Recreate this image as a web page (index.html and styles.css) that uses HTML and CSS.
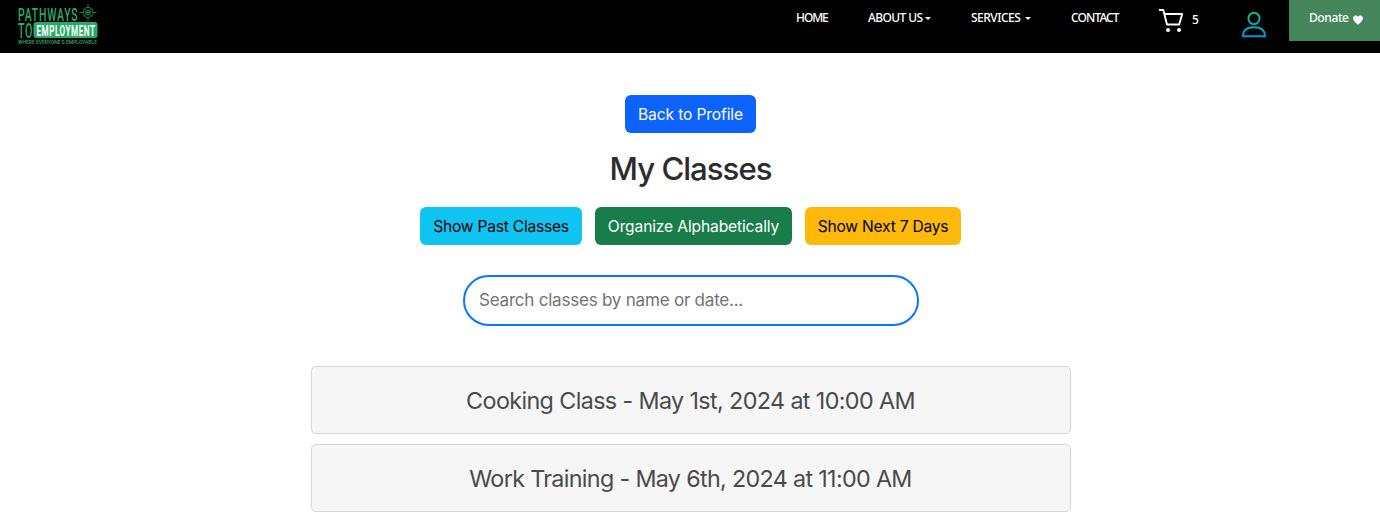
FILE: index.html
```html
<!DOCTYPE html>
<html lang="en">
<head>
<meta charset="utf-8">
<title>My Classes</title>
<link rel="stylesheet" href="styles.css">
</head>
<body>
<header class="navbar">
  <a class="brand">
    <svg width="82" height="42" viewBox="0 0 82 42">
      <g class="logo-text" fill="#2aaa6a">
        <text x="1" y="17.500" font-size="19" letter-spacing="1.500" textLength="60.500" lengthAdjust="spacingAndGlyphs">PATHWAYS</text>
        <text x="1" y="35" font-size="19.500" letter-spacing="1" textLength="15" lengthAdjust="spacingAndGlyphs">TO</text>
        <text x="1" y="40.800" font-size="5" textLength="79" lengthAdjust="spacingAndGlyphs">WHERE EVERYONE’S EMPLOYABLE</text>
      </g>
      <rect x="16.500" y="19" width="64" height="16" rx="3" fill="#2aaa6a"/>
      <text class="logo-text bold" x="19.500" y="32.800" font-size="15.500" letter-spacing="1" fill="#fff" textLength="59" lengthAdjust="spacingAndGlyphs">EMPLOYMENT</text>
      <g fill="none" stroke="#24955d" stroke-width=".8">
        <circle cx="71" cy="9.500" r="5"/>
        <circle cx="71" cy="9.500" r="2.300"/>
        <path d="M71 1v4M71 7v5M71 14v4M62.500 9.500h4M68.500 9.500h5M75.500 9.500h4M67 5.500l2.500 2.500M75 5.500l-2.500 2.500M67 13.500l2.500-2.500M75 13.500l-2.500-2.500"/>
      </g>
    </svg>
  </a>
  <nav class="links">
    <a class="link home">HOME</a>
    <a class="link about">ABOUT US<i class="caret"></i></a>
    <a class="link services">SERVICES<i class="caret"></i></a>
    <a class="link contact">CONTACT</a>
    <a class="cart">
      <svg width="24" height="24" viewBox="0 0 24 24" fill="none" stroke="#fff" stroke-width="1.900" stroke-linejoin="round">
        <path d="M0 1h4.300l3.700 14.500h12.200L23.200 5H5.400"/>
        <circle cx="9" cy="21" r="2" fill="#fff" stroke="none"/>
        <circle cx="20" cy="21" r="2" fill="#fff" stroke="none"/>
      </svg>
      <span class="count">5</span>
    </a>
    <a class="user">
      <svg width="24" height="26" viewBox="0 0 24 26" fill="none" stroke="url(#usergrad)" stroke-width="1.900">
        <defs><linearGradient id="usergrad" gradientUnits="userSpaceOnUse" x1="0" y1="0" x2="0" y2="26"><stop offset="0" stop-color="#00c98d"/><stop offset="1" stop-color="#0090dc"/></linearGradient></defs>
        <circle cx="12" cy="6.500" r="5.600"/>
        <path d="M1 24.200c0-5.500 3.500-9 11-9s11 3.500 11 9z"/>
      </svg>
    </a>
    <a class="donate"><span class="donate-text">Donate</span>
      <svg width="10" height="10" viewBox="0 0 10 10" fill="#fff"><path d="M5 9.700C2.500 7.500.1 5.500.1 3.200.1.300 3.500-.3 5 2 6.500-.3 9.900.3 9.900 3.200 9.900 5.500 7.500 7.500 5 9.700z"/></svg>
    </a>
  </nav>
</header>
<main class="page">
  <a class="btn primary">Back to Profile</a>
  <h1 class="title">My Classes</h1>
  <div class="actions">
    <a class="btn info">Show Past Classes</a>
    <a class="btn success">Organize Alphabetically</a>
    <a class="btn warning">Show Next 7 Days</a>
  </div>
  <input class="search" type="text" placeholder="Search classes by name or date...">
  <div class="list">
    <div class="card">Cooking Class - May 1st, 2024 at 10:00 AM</div>
    <div class="card work">Work Training - May 6th, 2024 at 11:00 AM</div>
  </div>
</main>
</body>
</html>
```
FILE: styles.css
```css
* { box-sizing: border-box; }
body { margin: 0; background: #fff; font-family: Inter, sans-serif; color: #2c2c2e; overflow: hidden; }
.navbar { height: 53px; background: #000; display: flex; justify-content: space-between; align-items: flex-start; }
.brand { padding: 3px 0 0 17px; }
.brand svg { overflow: visible; }
.brand svg, .links svg { display: block; }
.logo-text { font-family: Roboto, sans-serif; font-weight: 500; }
.bold { font-weight: 700; }
.links { display: flex; align-items: flex-start; font-family: "Noto Sans", sans-serif; font-size: 12px; font-weight: 500; color: #fff; }
.link { margin-right: 40px; padding-top: 9px; line-height: 18px; white-space: nowrap; display: flex; align-items: center; justify-content: space-between; }
.home { width: 32px; padding-left: 1px; letter-spacing: -1.1px; }
.about { width: 64px; padding-left: 1px; letter-spacing: -.6px; }
.services { width: 60px; letter-spacing: -.5px; }
.contact { width: 48px; letter-spacing: -.9px; }
.caret { border: 3px solid transparent; border-top-color: #fff; border-bottom: 0; }
.cart { display: flex; width: 83px; padding-top: 9px; }
.count { margin: 2px 0 0 9px; line-height: 18px; }
.user { width: 47px; padding-top: 12px; }
.donate { width: 91px; height: 41px; padding: 9px 0 0 20px; background: #46865d; display: flex; line-height: 18px; }
.donate-text { width: 44px; letter-spacing: -.4px; }
.donate svg { margin-top: 6px; }
.page { width: 760px; margin-left: 311px; padding-top: 42px; display: flex; flex-direction: column; align-items: center; }
.btn { height: 38px; border-radius: 6px; display: flex; align-items: center; justify-content: center; font-size: 15.6px; white-space: nowrap; color: #000; letter-spacing: -.23px; }
.primary { width: 131px; margin-right: 1px; background: #0d63fd; color: #fff; letter-spacing: -.12px; }
.title { margin: 16px 1px 18px 0; height: 40px; line-height: 41px; font-size: 31.2px; font-weight: 500; letter-spacing: -1px; }
.actions { display: flex; gap: 13px; margin-right: 1px; }
.info { width: 162px; background: #10c4f1; }
.success { width: 197px; background: #197d4b; color: #fff; letter-spacing: -.14px; }
.warning { width: 156px; background: #ffb90a; }
.search { width: 456px; height: 51px; margin: 30px 0 40px; padding: 0 14px 2px; border: 2px solid #0a75fb; border-radius: 26px; font: 17.1px Inter, sans-serif; letter-spacing: -.26px; background: #fff; }
.search::placeholder { color: #737375; }
.list { width: 100%; display: grid; gap: 10px; }
.card { height: 68px; border: 1px solid #d6d6d6; border-radius: 5px; background: #f6f6f6; display: flex; align-items: center; justify-content: center; padding-right: 1px; font-size: 23.3px; color: #4a4a4b; letter-spacing: -.61px; white-space: nowrap; }
.work { letter-spacing: -.66px; }
```
